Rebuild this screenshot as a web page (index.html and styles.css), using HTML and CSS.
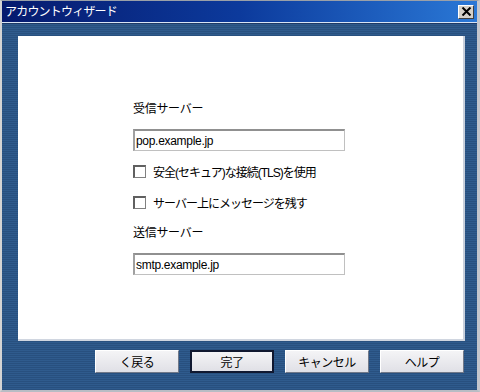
FILE: index.html
```html
<!DOCTYPE html>
<html lang="ja">

<head>
    <meta charset="UTF-8">
    <title>アカウントウィザード</title>
    <link rel="stylesheet" href="styles.css">
</head>

<body>
    <div class="window">
        <!-- Title bar -->
        <div class="titlebar">
            <span class="title">アカウントウィザード</span>
            <span class="close-btn">
                <svg width="11" height="9" viewBox="0 0 11 9">
                    <path d="M1.5 0.5 L9.5 8.5 M9.5 0.5 L1.5 8.5" stroke="#000" stroke-width="2" fill="none"/>
                </svg>
            </span>
        </div>

        <div class="body">
            <!-- Form panel -->
            <div class="panel">
                <div class="form">
                    <div class="label">受信サーバー</div>
                    <div class="textbox">pop.example.jp</div>
                    <label class="check"><span class="box"></span>安全(セキュア)な接続(TLS)を使用</label>
                    <label class="check"><span class="box"></span>サーバー上にメッセージを残す</label>
                    <div class="label">送信サーバー</div>
                    <div class="textbox">smtp.example.jp</div>
                </div>
            </div>

            <!-- Buttons -->
            <div class="buttons">
                <button class="btn">く戻る</button>
                <button class="btn default">完了</button>
                <button class="btn">キャンセル</button>
                <button class="btn">ヘルプ</button>
            </div>
        </div>
    </div>
</body>

</html>
```

FILE: styles.css
```css
body {
    margin: 0;
    font-family: "Liberation Sans", "Noto Sans CJK JP", sans-serif;
    font-size: 12px;
    background-color: #c8c8c8;
}

.window {
    width: 480px;
    height: 392px;
    box-sizing: border-box;
    border: 1px solid #9aa0a8;
    border-left: 2px solid #d4d4d4;
    border-right: 3px solid #c4c6cc;
    border-bottom: 2px solid #b8bcc4;
    display: flex;
    flex-direction: column;
}

/* Title bar */
.titlebar {
    height: 21px;
    display: flex;
    align-items: center;
    justify-content: space-between;
    padding: 0 3px 0 3px;
    background: linear-gradient(to right, #061a6e, #0c3a9c 50%, #2a78d6);
    border-bottom: 1px solid #d8e4f4;
    color: #fff;
}

.title {
    font-size: 12px;
    line-height: 14px;
    letter-spacing: -0.8px;
}

.close-btn {
    width: 16px;
    height: 14px;
    background-color: #d4d0c8;
    border: 1px solid;
    border-color: #fff #404040 #404040 #fff;
    box-sizing: border-box;
    display: flex;
    align-items: center;
    justify-content: center;
}

.body {
    flex: 1;
    display: flex;
    flex-direction: column;
    padding: 12px 12px 0 16px;
    background: repeating-linear-gradient(to bottom, #2f5b8d 0, #2f5b8d 1px, #28507f 1px, #28507f 2px);
    border-top: 1px solid #1e3a66;
}

/* White panel */
.panel {
    height: 305px;
    background-color: #fff;
    border-right: 2px solid #c8d0dc;
    border-bottom: 2px solid #d0d6e0;
    box-sizing: border-box;
    padding: 66px 0 0 115px;
}

.form {
    display: flex;
    flex-direction: column;
    color: #000;
}

.label {
    height: 15px;
    line-height: 15px;
    margin-bottom: 12px;
    letter-spacing: -0.3px;
}

.textbox {
    width: 212px;
    height: 22px;
    box-sizing: border-box;
    border: 1px solid #c0c0c0;
    border-top: 2px solid #909090;
    border-left: 2px solid #a0a0a0;
    padding: 2px 0 0 1px;
    line-height: 16px;
    letter-spacing: -0.3px;
    margin-bottom: 13px;
}

.check {
    display: flex;
    align-items: center;
    height: 14px;
    margin-bottom: 17px;
    letter-spacing: -1px;
}

.box {
    width: 13px;
    height: 13px;
    box-sizing: border-box;
    border: 1px solid #808080;
    border-top: 2px solid #606060;
    border-left: 2px solid #606060;
    background-color: #fff;
    margin-right: 7px;
    flex-shrink: 0;
}

/* Dialog buttons */
.buttons {
    display: flex;
    justify-content: flex-end;
    gap: 11px;
    padding: 9px 1px 0 0;
}

.btn {
    width: 84px;
    height: 23px;
    font-family: "Liberation Sans", "Noto Sans CJK JP", sans-serif;
    font-size: 12px;
    letter-spacing: -0.5px;
    color: #000;
    background: linear-gradient(to bottom, #f4f4f6, #e0e0e6);
    border: 1px solid;
    border-color: #fff #707888 #707888 #fff;
    padding: 0;
}

.btn.default {
    border: 2px solid #101830;
}
```
